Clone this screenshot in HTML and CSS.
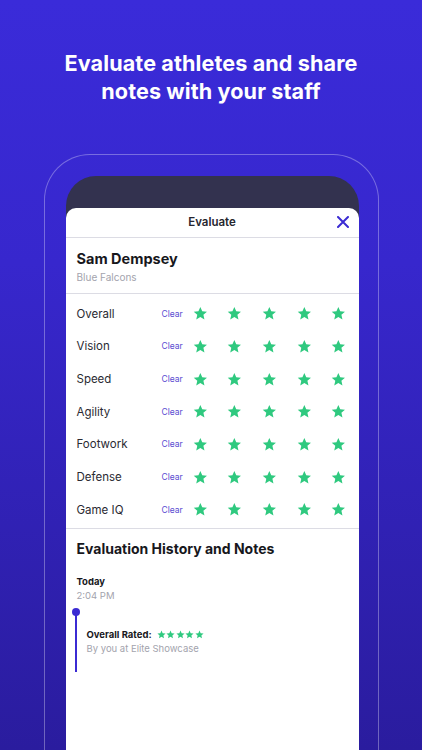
FILE: index.html
```html
<!DOCTYPE html>
<html>
<head>
<meta charset="utf-8">
<link rel="stylesheet" href="styles.css">
</head>
<body>
<div class="page">
  <h1 class="headline">Evaluate athletes and share<br>notes with your staff</h1>
  <div class="frame">
    <div class="screen">
      <div class="sheet">
        <div class="sheet-header">
          <span class="sheet-title">Evaluate</span>
          <svg class="close" width="12" height="12" viewBox="0 0 12 12"><path d="M1 1L11 11M11 1L1 11" stroke="#3b2bd3" stroke-width="2" stroke-linecap="round"/></svg>
        </div>
        <div class="athlete">
          <div class="athlete-name">Sam Dempsey</div>
          <div class="athlete-team">Blue Falcons</div>
        </div>
        <div class="ratings">
          <div class="rating-row"><span class="rating-label">Overall</span><span class="clear">Clear</span><div class="stars"><svg class="star" viewBox="0 0 24 24"><polygon points="12,1.5 15.1,8.6 22.8,9.3 17,14.4 18.7,22 12,18 5.3,22 7,14.4 1.2,9.3 8.9,8.6"/></svg><svg class="star" viewBox="0 0 24 24"><polygon points="12,1.5 15.1,8.6 22.8,9.3 17,14.4 18.7,22 12,18 5.3,22 7,14.4 1.2,9.3 8.9,8.6"/></svg><svg class="star" viewBox="0 0 24 24"><polygon points="12,1.5 15.1,8.6 22.8,9.3 17,14.4 18.7,22 12,18 5.3,22 7,14.4 1.2,9.3 8.9,8.6"/></svg><svg class="star" viewBox="0 0 24 24"><polygon points="12,1.5 15.1,8.6 22.8,9.3 17,14.4 18.7,22 12,18 5.3,22 7,14.4 1.2,9.3 8.9,8.6"/></svg><svg class="star" viewBox="0 0 24 24"><polygon points="12,1.5 15.1,8.6 22.8,9.3 17,14.4 18.7,22 12,18 5.3,22 7,14.4 1.2,9.3 8.9,8.6"/></svg></div></div>
          <div class="rating-row"><span class="rating-label">Vision</span><span class="clear">Clear</span><div class="stars"><svg class="star" viewBox="0 0 24 24"><polygon points="12,1.5 15.1,8.6 22.8,9.3 17,14.4 18.7,22 12,18 5.3,22 7,14.4 1.2,9.3 8.9,8.6"/></svg><svg class="star" viewBox="0 0 24 24"><polygon points="12,1.5 15.1,8.6 22.8,9.3 17,14.4 18.7,22 12,18 5.3,22 7,14.4 1.2,9.3 8.9,8.6"/></svg><svg class="star" viewBox="0 0 24 24"><polygon points="12,1.5 15.1,8.6 22.8,9.3 17,14.4 18.7,22 12,18 5.3,22 7,14.4 1.2,9.3 8.9,8.6"/></svg><svg class="star" viewBox="0 0 24 24"><polygon points="12,1.5 15.1,8.6 22.8,9.3 17,14.4 18.7,22 12,18 5.3,22 7,14.4 1.2,9.3 8.9,8.6"/></svg><svg class="star" viewBox="0 0 24 24"><polygon points="12,1.5 15.1,8.6 22.8,9.3 17,14.4 18.7,22 12,18 5.3,22 7,14.4 1.2,9.3 8.9,8.6"/></svg></div></div>
          <div class="rating-row"><span class="rating-label">Speed</span><span class="clear">Clear</span><div class="stars"><svg class="star" viewBox="0 0 24 24"><polygon points="12,1.5 15.1,8.6 22.8,9.3 17,14.4 18.7,22 12,18 5.3,22 7,14.4 1.2,9.3 8.9,8.6"/></svg><svg class="star" viewBox="0 0 24 24"><polygon points="12,1.5 15.1,8.6 22.8,9.3 17,14.4 18.7,22 12,18 5.3,22 7,14.4 1.2,9.3 8.9,8.6"/></svg><svg class="star" viewBox="0 0 24 24"><polygon points="12,1.5 15.1,8.6 22.8,9.3 17,14.4 18.7,22 12,18 5.3,22 7,14.4 1.2,9.3 8.9,8.6"/></svg><svg class="star" viewBox="0 0 24 24"><polygon points="12,1.5 15.1,8.6 22.8,9.3 17,14.4 18.7,22 12,18 5.3,22 7,14.4 1.2,9.3 8.9,8.6"/></svg><svg class="star" viewBox="0 0 24 24"><polygon points="12,1.5 15.1,8.6 22.8,9.3 17,14.4 18.7,22 12,18 5.3,22 7,14.4 1.2,9.3 8.9,8.6"/></svg></div></div>
          <div class="rating-row"><span class="rating-label">Agility</span><span class="clear">Clear</span><div class="stars"><svg class="star" viewBox="0 0 24 24"><polygon points="12,1.5 15.1,8.6 22.8,9.3 17,14.4 18.7,22 12,18 5.3,22 7,14.4 1.2,9.3 8.9,8.6"/></svg><svg class="star" viewBox="0 0 24 24"><polygon points="12,1.5 15.1,8.6 22.8,9.3 17,14.4 18.7,22 12,18 5.3,22 7,14.4 1.2,9.3 8.9,8.6"/></svg><svg class="star" viewBox="0 0 24 24"><polygon points="12,1.5 15.1,8.6 22.8,9.3 17,14.4 18.7,22 12,18 5.3,22 7,14.4 1.2,9.3 8.9,8.6"/></svg><svg class="star" viewBox="0 0 24 24"><polygon points="12,1.5 15.1,8.6 22.8,9.3 17,14.4 18.7,22 12,18 5.3,22 7,14.4 1.2,9.3 8.9,8.6"/></svg><svg class="star" viewBox="0 0 24 24"><polygon points="12,1.5 15.1,8.6 22.8,9.3 17,14.4 18.7,22 12,18 5.3,22 7,14.4 1.2,9.3 8.9,8.6"/></svg></div></div>
          <div class="rating-row"><span class="rating-label">Footwork</span><span class="clear">Clear</span><div class="stars"><svg class="star" viewBox="0 0 24 24"><polygon points="12,1.5 15.1,8.6 22.8,9.3 17,14.4 18.7,22 12,18 5.3,22 7,14.4 1.2,9.3 8.9,8.6"/></svg><svg class="star" viewBox="0 0 24 24"><polygon points="12,1.5 15.1,8.6 22.8,9.3 17,14.4 18.7,22 12,18 5.3,22 7,14.4 1.2,9.3 8.9,8.6"/></svg><svg class="star" viewBox="0 0 24 24"><polygon points="12,1.5 15.1,8.6 22.8,9.3 17,14.4 18.7,22 12,18 5.3,22 7,14.4 1.2,9.3 8.9,8.6"/></svg><svg class="star" viewBox="0 0 24 24"><polygon points="12,1.5 15.1,8.6 22.8,9.3 17,14.4 18.7,22 12,18 5.3,22 7,14.4 1.2,9.3 8.9,8.6"/></svg><svg class="star" viewBox="0 0 24 24"><polygon points="12,1.5 15.1,8.6 22.8,9.3 17,14.4 18.7,22 12,18 5.3,22 7,14.4 1.2,9.3 8.9,8.6"/></svg></div></div>
          <div class="rating-row"><span class="rating-label">Defense</span><span class="clear">Clear</span><div class="stars"><svg class="star" viewBox="0 0 24 24"><polygon points="12,1.5 15.1,8.6 22.8,9.3 17,14.4 18.7,22 12,18 5.3,22 7,14.4 1.2,9.3 8.9,8.6"/></svg><svg class="star" viewBox="0 0 24 24"><polygon points="12,1.5 15.1,8.6 22.8,9.3 17,14.4 18.7,22 12,18 5.3,22 7,14.4 1.2,9.3 8.9,8.6"/></svg><svg class="star" viewBox="0 0 24 24"><polygon points="12,1.5 15.1,8.6 22.8,9.3 17,14.4 18.7,22 12,18 5.3,22 7,14.4 1.2,9.3 8.9,8.6"/></svg><svg class="star" viewBox="0 0 24 24"><polygon points="12,1.5 15.1,8.6 22.8,9.3 17,14.4 18.7,22 12,18 5.3,22 7,14.4 1.2,9.3 8.9,8.6"/></svg><svg class="star" viewBox="0 0 24 24"><polygon points="12,1.5 15.1,8.6 22.8,9.3 17,14.4 18.7,22 12,18 5.3,22 7,14.4 1.2,9.3 8.9,8.6"/></svg></div></div>
          <div class="rating-row"><span class="rating-label">Game IQ</span><span class="clear">Clear</span><div class="stars"><svg class="star" viewBox="0 0 24 24"><polygon points="12,1.5 15.1,8.6 22.8,9.3 17,14.4 18.7,22 12,18 5.3,22 7,14.4 1.2,9.3 8.9,8.6"/></svg><svg class="star" viewBox="0 0 24 24"><polygon points="12,1.5 15.1,8.6 22.8,9.3 17,14.4 18.7,22 12,18 5.3,22 7,14.4 1.2,9.3 8.9,8.6"/></svg><svg class="star" viewBox="0 0 24 24"><polygon points="12,1.5 15.1,8.6 22.8,9.3 17,14.4 18.7,22 12,18 5.3,22 7,14.4 1.2,9.3 8.9,8.6"/></svg><svg class="star" viewBox="0 0 24 24"><polygon points="12,1.5 15.1,8.6 22.8,9.3 17,14.4 18.7,22 12,18 5.3,22 7,14.4 1.2,9.3 8.9,8.6"/></svg><svg class="star" viewBox="0 0 24 24"><polygon points="12,1.5 15.1,8.6 22.8,9.3 17,14.4 18.7,22 12,18 5.3,22 7,14.4 1.2,9.3 8.9,8.6"/></svg></div></div>
        </div>
        <div class="history">
          <h2 class="history-title">Evaluation History and Notes</h2>
          <div class="day">Today</div>
          <div class="time">2:04 PM</div>
          <div class="timeline">
            <div class="tl-dot"></div>
            <div class="entry">
              <div class="entry-head"><span class="entry-label">Overall Rated:</span><span class="mini-stars"><svg class="mini-star" viewBox="0 0 24 24"><polygon points="12,1.5 15.1,8.6 22.8,9.3 17,14.4 18.7,22 12,18 5.3,22 7,14.4 1.2,9.3 8.9,8.6"/></svg><svg class="mini-star" viewBox="0 0 24 24"><polygon points="12,1.5 15.1,8.6 22.8,9.3 17,14.4 18.7,22 12,18 5.3,22 7,14.4 1.2,9.3 8.9,8.6"/></svg><svg class="mini-star" viewBox="0 0 24 24"><polygon points="12,1.5 15.1,8.6 22.8,9.3 17,14.4 18.7,22 12,18 5.3,22 7,14.4 1.2,9.3 8.9,8.6"/></svg><svg class="mini-star" viewBox="0 0 24 24"><polygon points="12,1.5 15.1,8.6 22.8,9.3 17,14.4 18.7,22 12,18 5.3,22 7,14.4 1.2,9.3 8.9,8.6"/></svg><svg class="mini-star" viewBox="0 0 24 24"><polygon points="12,1.5 15.1,8.6 22.8,9.3 17,14.4 18.7,22 12,18 5.3,22 7,14.4 1.2,9.3 8.9,8.6"/></svg></span></div>
              <div class="entry-sub">By you at Elite Showcase</div>
            </div>
          </div>
        </div>
      </div>
    </div>
  </div>
</div>
</body>
</html>
```

FILE: styles.css
```css
html, body {
  margin: 0;
  padding: 0;
}
body {
  width: 422px;
  height: 750px;
  overflow: hidden;
  background: linear-gradient(180deg, #3a2bd9 0%, #3727cd 35%, #2a1c9e 100%);
  font-family: Inter, "Noto Sans", sans-serif;
}
.page {
  height: 750px;
  overflow: hidden;
}
.headline {
  margin: 0;
  padding-top: 49px;
  color: #ffffff;
  font-size: 21.6px;
  line-height: 28px;
  font-weight: 700;
  text-align: center;
  letter-spacing: 0.1px;
}
.frame {
  margin: 49px 0 0 44px;
  width: 293px;
  height: 700px;
  border: 1.5px solid rgba(255, 255, 255, 0.32);
  border-bottom: none;
  border-radius: 46px 46px 0 0;
  padding: 20.5px 19.5px 0 20.5px;
}
.screen {
  background: #33324f;
  border-radius: 30px 30px 0 0;
  padding-top: 32px;
  height: 700px;
}
.sheet {
  background: #ffffff;
  border-radius: 10px 10px 0 0;
  height: 700px;
}
.sheet-header {
  height: 29px;
  display: flex;
  align-items: center;
  justify-content: center;
  border-bottom: 1.5px solid #dcdce4;
  position: relative;
}
.sheet-title {
  font-size: 11.5px;
  font-weight: 600;
  color: #26262e;
}
.close {
  position: absolute;
  right: 10px;
  top: 8.5px;
}
.athlete {
  padding: 12px 11px 0 11px;
  height: 43.5px;
  border-bottom: 1.5px solid #dcdce4;
}
.athlete-name {
  font-size: 14.5px;
  font-weight: 700;
  color: #17171c;
  line-height: 18px;
}
.athlete-team {
  margin-top: 3px;
  font-size: 10px;
  color: #a3a3ad;
  line-height: 13px;
}
.ratings {
  padding: 3.5px 0 1.5px 0;
  border-bottom: 1.5px solid #dcdce4;
}
.rating-row {
  height: 32.67px;
  display: flex;
  align-items: center;
  padding-left: 11px;
}
.rating-label {
  width: 85px;
  font-size: 11.5px;
  color: #2a2a32;
}
.clear {
  width: 31px;
  font-size: 8.5px;
  color: #5a4bd1;
}
.stars {
  display: flex;
  gap: 20px;
}
.star {
  width: 14.7px;
  height: 14.7px;
  fill: #2fc97f;
}
.history {
  padding: 11px 11px 0 11px;
}
.history-title {
  margin: 0;
  font-size: 14px;
  line-height: 18px;
  font-weight: 700;
  color: #17171c;
}
.day {
  margin-top: 18px;
  font-size: 9.5px;
  line-height: 12px;
  font-weight: 700;
  color: #17171c;
}
.time {
  margin-top: 2px;
  font-size: 9.5px;
  line-height: 12px;
  color: #a3a3ad;
}
.timeline {
  margin-top: 10px;
  margin-left: -1.5px;
  border-left: 2px solid #3b2bd3;
  height: 60px;
  position: relative;
  padding-left: 9.5px;
}
.tl-dot {
  position: absolute;
  left: -5px;
  top: -3.5px;
  width: 8px;
  height: 8px;
  border-radius: 50%;
  background: #3b2bd3;
}
.entry {
  padding-top: 17px;
}
.entry-head {
  display: flex;
  align-items: center;
  gap: 5px;
}
.entry-label {
  font-size: 9.5px;
  line-height: 12px;
  font-weight: 700;
  color: #17171c;
}
.mini-stars {
  display: flex;
  gap: 0.5px;
}
.mini-star {
  width: 9px;
  height: 9px;
  fill: #2fc97f;
}
.entry-sub {
  margin-top: 2px;
  font-size: 9.5px;
  line-height: 12px;
  color: #a3a3ad;
}
```
